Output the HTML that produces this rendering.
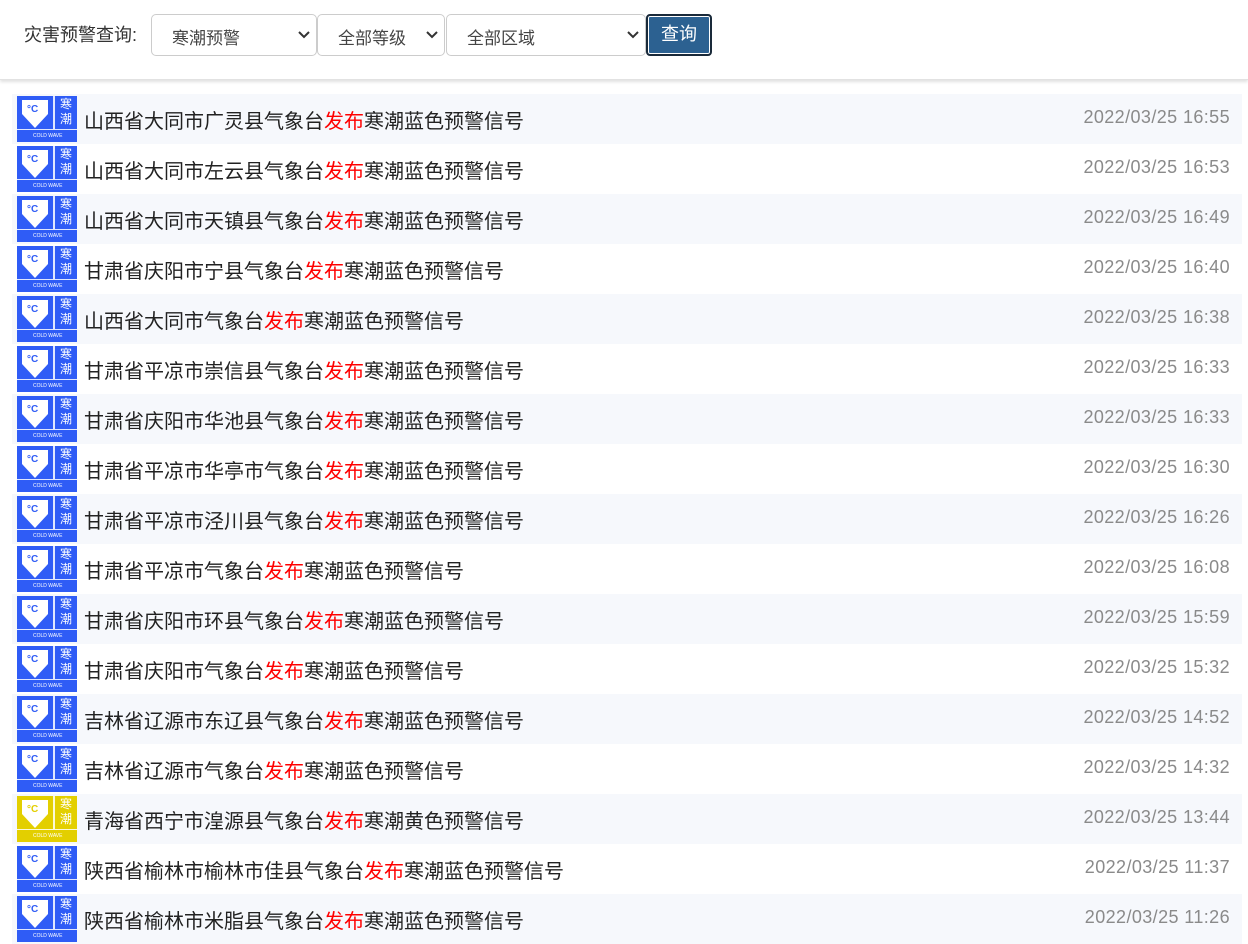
<!DOCTYPE html>
<html><head><meta charset="utf-8"><style>
*{box-sizing:border-box;margin:0;padding:0}
body{width:1248px;height:940px;overflow:hidden;background:#fff;font-family:"Liberation Sans","Noto Sans CJK SC",sans-serif;color:#333}
.hdr{height:80px;position:relative;box-shadow:0 2px 3px rgba(0,0,0,.12);border-bottom:1px solid #e2e2e2}
.lbl{position:absolute;left:24px;top:21px;font-size:18px;color:#333}
.sel{position:absolute;top:14px;height:42px;border:1px solid #ccc;border-radius:5px;font-size:17px;color:#444;padding:9px 0 0 20px;background:#fff}
.sel svg{position:absolute;right:6px;top:16px}
.btn{position:absolute;left:646px;top:14px;width:66px;height:42px;background:#2c6191;border:2px solid #1a2a3a;border-radius:4px;color:#fff;font-size:18px;text-align:center;line-height:37px;box-shadow:inset 0 0 0 1px #fff}
.list{position:absolute;top:94px;left:12px;width:1230px}
.row{height:50px;position:relative}
.row:nth-child(odd){background:#f6f8fc}
.ic{position:absolute;left:5px;top:2px;width:60px;height:46px;background:#2f5cf6}
.ic.y{background:#e3cf00}
.ic .l{position:absolute;left:0;top:0;width:36px;height:33px}
.ic .v{position:absolute;left:36px;top:0;width:2px;height:33px;background:#fff;opacity:.85}
.ic .h{position:absolute;left:0;top:33px;width:60px;height:1px;background:#fff;opacity:.85}
.ic .r{position:absolute;left:38px;top:1px;width:22px;height:31px;color:#fff;font-size:12px;line-height:15px;text-align:center}
.ic .b{position:absolute;left:2px;top:35px;width:56px;height:10px;color:#fff;font-size:5px;line-height:10px;padding-left:14px}
.t{position:absolute;left:72px;top:11px;font-size:20px;color:#222}
.t i{font-style:normal;color:#f00}
.d{position:absolute;right:12px;top:13px;font-size:18px;color:#8a8a8a;letter-spacing:.4px}
</style></head><body>
<div class="hdr">
<div class="lbl">灾害预警查询:</div>
<div class="sel" style="left:151px;width:166px">寒潮预警<svg width="12" height="8"><path d="M1 1l5 5 5-5" stroke="#333" stroke-width="2" fill="none"/></svg></div>
<div class="sel" style="left:317px;width:128px">全部等级<svg width="12" height="8"><path d="M1 1l5 5 5-5" stroke="#333" stroke-width="2" fill="none"/></svg></div>
<div class="sel" style="left:446px;width:200px">全部区域<svg width="12" height="8"><path d="M1 1l5 5 5-5" stroke="#333" stroke-width="2" fill="none"/></svg></div>
<div class="btn">查询</div>
</div>
<div class="list" id="L"></div>
<script>
var d=[["山西省大同市广灵县气象台","蓝","16:55"],["山西省大同市左云县气象台","蓝","16:53"],["山西省大同市天镇县气象台","蓝","16:49"],["甘肃省庆阳市宁县气象台","蓝","16:40"],["山西省大同市气象台","蓝","16:38"],["甘肃省平凉市崇信县气象台","蓝","16:33"],["甘肃省庆阳市华池县气象台","蓝","16:33"],["甘肃省平凉市华亭市气象台","蓝","16:30"],["甘肃省平凉市泾川县气象台","蓝","16:26"],["甘肃省平凉市气象台","蓝","16:08"],["甘肃省庆阳市环县气象台","蓝","15:59"],["甘肃省庆阳市气象台","蓝","15:32"],["吉林省辽源市东辽县气象台","蓝","14:52"],["吉林省辽源市气象台","蓝","14:32"],["青海省西宁市湟源县气象台","黄","13:44"],["陕西省榆林市榆林市佳县气象台","蓝","11:37"],["陕西省榆林市米脂县气象台","蓝","11:26"]];
var h="";d.forEach(function(r){var y=r[1]=="黄";var col=y?"#e3cf00":"#2f5cf6";h+='<div class="row"><div class="ic '+(y?"y":"")+'"><div class="l"><svg width="36" height="33" viewBox="0 0 36 33"><path d="M5 4h26v14l-13 14-13-14z" fill="#fff"/><text x="10" y="16" font-size="10" font-weight="bold" fill="'+col+'" font-family="Liberation Sans">°C</text></svg></div><div class="v"></div><div class="h"></div><div class="r">寒<br>潮</div><div class="b">COLD WAVE</div></div><div class="t">'+r[0]+'<i>发布</i>寒潮'+r[1]+'色预警信号</div><div class="d">2022/03/25 '+r[2]+'</div></div>'});
document.getElementById("L").innerHTML=h;
</script>
</body></html>
